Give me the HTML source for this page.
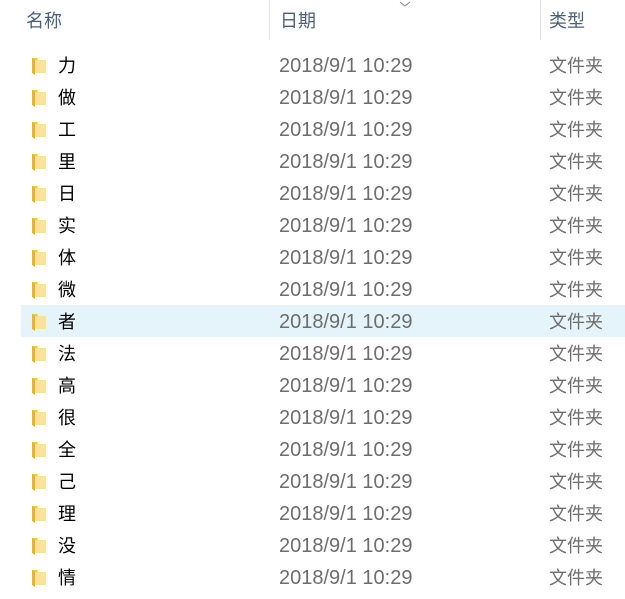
<html><head><style>
body{margin:0;width:625px;height:599px;background:#fff;font-family:"Liberation Sans","Noto Sans CJK SC",sans-serif;position:relative;overflow:hidden}
.h{position:absolute;top:9px;font-size:18px;color:#4c607a;line-height:24px}
.sep{position:absolute;top:0;width:1px;height:40px;background:#e5e5e5}
.r{position:absolute;left:21px;width:604px;height:32px}
.r.s{background:#e5f3fb}
.r span{position:absolute;top:1px;line-height:32px;height:32px}
.n{left:37px;color:#000;font-size:18px}.d{left:258px;color:#6d6d6d;font-size:20px}.t{left:528px;color:#6d6d6d;font-size:18px}
.f{position:absolute;left:10px;top:8px}
</style></head><body>
<div class="h" style="left:26px">名称</div>
<div class="h" style="left:280px">日期</div>
<div class="h" style="left:549px">类型</div>
<div class="sep" style="left:269px"></div><div class="sep" style="left:540px"></div>
<svg style="position:absolute;left:399px;top:0" width="12" height="8"><path d="M1 2L6 6L11 2" stroke="#888" fill="none"/></svg>
<div id="list"></div>
<script>
var c="力做工里日实体微者法高很全己理没情",h="";
for(var i=0;i<c.length;i++){h+='<div class="r'+(i==8?' s':'')+'" style="top:'+(49+i*32)+'px"><svg class="f" width="16" height="18"><path d="M1 1h5l1 2h8v13H1z" fill="#f0c24f"/><path d="M4 3h11v13H4z" fill="#fbe29a"/><path d="M1 1v15l3 2V3z" fill="#e6b43e"/></svg><span class="n">'+c[i]+'</span><span class="d">2018/9/1 10:29</span><span class="t">文件夹</span></div>'}
document.getElementById('list').innerHTML=h;
</script>
</body></html>
